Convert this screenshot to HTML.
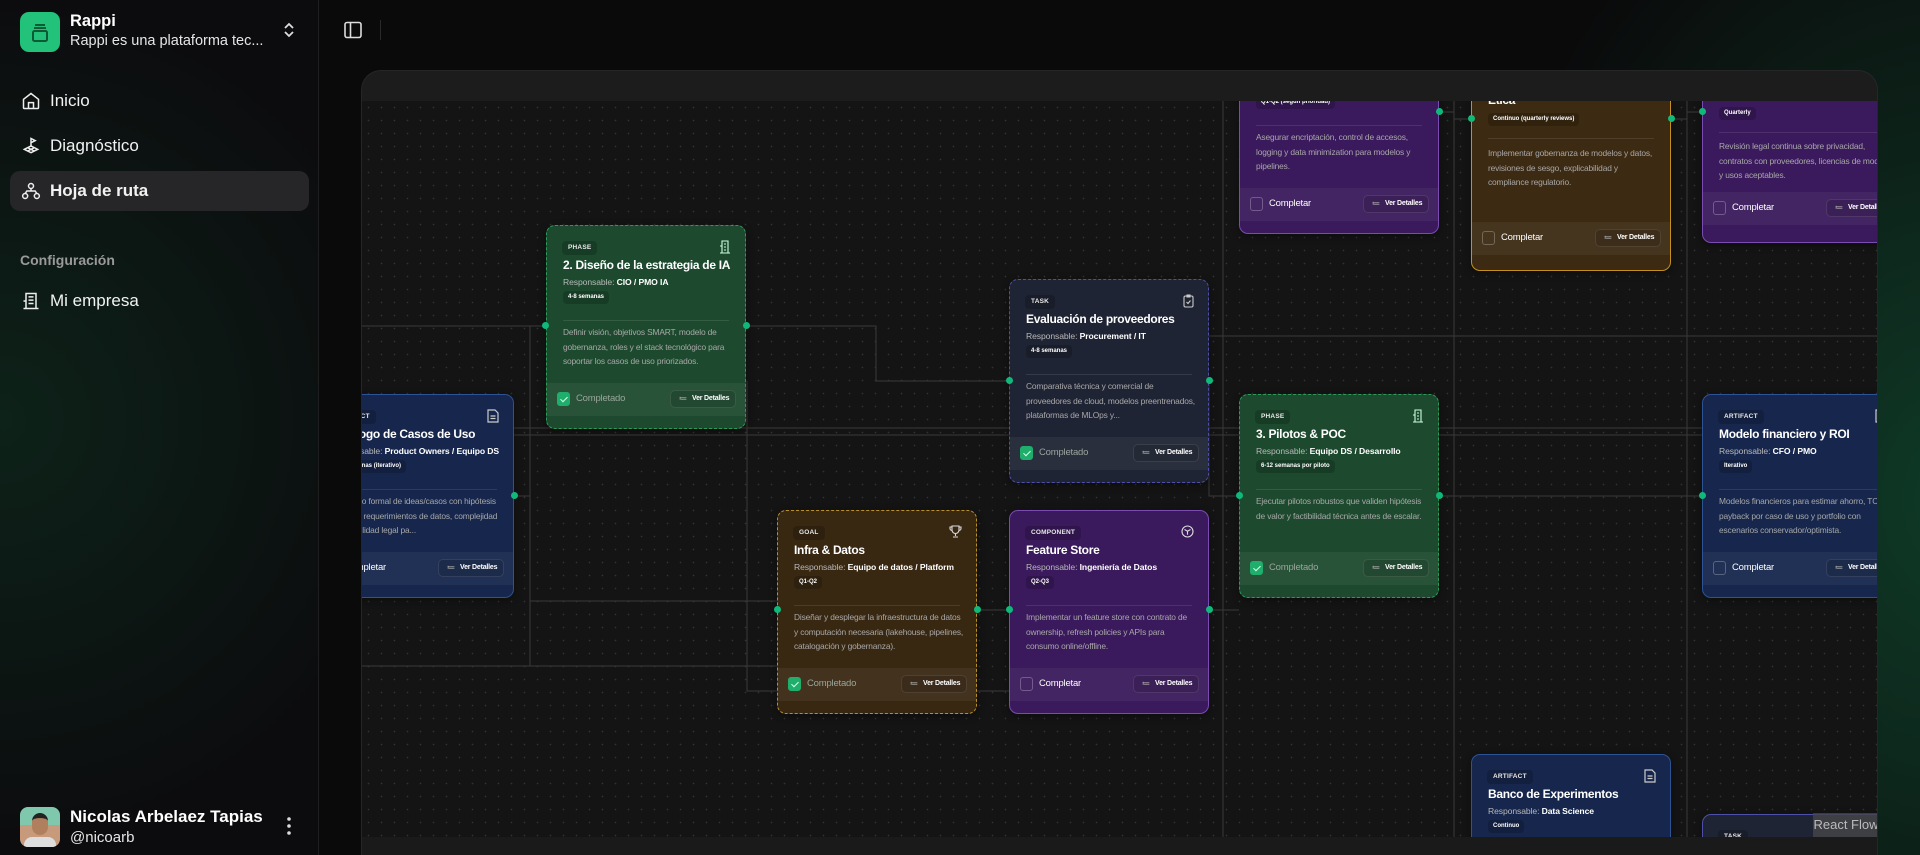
<!DOCTYPE html>
<html><head><meta charset="utf-8"><style>
*{box-sizing:border-box;margin:0;padding:0}
body{width:1920px;height:855px;overflow:hidden;background:#0a0a0b;font-family:"Liberation Sans",sans-serif;color:#fff;position:relative}
.glow{position:absolute;inset:0;background:radial-gradient(ellipse 500px 700px at 1950px 500px,#0f3a27 0%,rgba(10,10,11,0) 100%)}
.side{position:absolute;left:0;top:0;width:319px;height:855px;border-right:1px solid #1e1e20;background:radial-gradient(ellipse 420px 420px at 0px 420px,#0d2219 0%,rgba(12,12,14,0) 100%),#0c0c0e}
.logo{position:absolute;left:20px;top:12px;width:40px;height:40px;border-radius:9px;background:#22c27a}
.nav{position:absolute;left:10px;width:299px;height:40px;display:flex;align-items:center;font-size:17px;color:#f2f2f2}
.nav svg{position:absolute;left:11px}
.nav span{position:absolute;left:40px}
.panel{position:absolute;left:361px;top:70px;width:1517px;height:785px;border-radius:20px 20px 0 0;background:#1c1c1d;border:1px solid #262628;border-bottom:none;overflow:hidden}
.canvas{position:absolute;left:0;top:30px;width:1517px;height:736px;background-color:#141414;background-image:radial-gradient(#333 0.7px,transparent 0.9px);background-size:13px 13px;overflow:hidden}
.bottom{position:absolute;left:0;top:766px;width:1517px;height:30px;background:#1a1a1b}
.card{position:absolute;width:200px;height:204px;border-radius:9px;overflow:hidden;box-shadow:0 2px 8px rgba(0,0,0,.4)}
.badge{position:absolute;left:15px;top:15px;height:14px;padding:0 6px;font-size:6.5px;font-weight:bold;line-height:14px;border-radius:4px;background:rgba(0,0,0,.18);color:#e8e8e8;letter-spacing:.2px}
.ic{position:absolute;right:14px;top:14px}
.t{position:absolute;left:16px;top:32px;font-size:12px;font-weight:bold;white-space:nowrap;letter-spacing:-.3px}
.r{position:absolute;left:16px;top:51px;font-size:8.6px;color:#b8b8b8;white-space:nowrap;letter-spacing:-.1px}
.r b{color:#fff}
.p{position:absolute;left:16px;top:65px;height:13px;padding:0 5px;font-size:6px;font-weight:bold;line-height:13px;border-radius:4px;background:rgba(0,0,0,.18);white-space:nowrap}
.hr{position:absolute;left:16px;right:16px;top:94px;height:1px;background:rgba(255,255,255,.1)}
.d{position:absolute;left:16px;right:10px;top:99px;font-size:8.4px;line-height:14.5px;color:#a8a8a8;letter-spacing:-.15px}
.f{position:absolute;left:0;right:0;top:157px;height:33px;background:rgba(255,255,255,.05)}
.cb{position:absolute;left:10px;top:9px;width:13px;height:14px;border-radius:3px;border:1px solid rgba(255,255,255,.25)}
.cb.on{background:#1fae6c;border-color:#1fae6c}
.cb.on:after{content:"";position:absolute;left:4px;top:2px;width:3px;height:6px;border:solid #d9ffe9;border-width:0 1.3px 1.3px 0;transform:rotate(45deg)}
.fl{position:absolute;left:29px;top:10px;font-size:9.5px;color:#fff;letter-spacing:-.2px}
.fl.g{color:#9aa59c}
.btn{position:absolute;right:9px;top:7px;width:66px;height:18px;border-radius:5px;border:1px solid rgba(255,255,255,.1);background:rgba(0,0,0,.12);font-size:7px;font-weight:bold;line-height:16px;padding-left:21px;color:#fff;white-space:nowrap;letter-spacing:-.2px}
.btn:before{content:"≔";position:absolute;left:8px;top:0;font-size:8px;color:#aaa}
.h{position:absolute;width:7px;height:7px;border-radius:50%;background:#10b97a;top:95px}
.green{background:#1d4a2e;border:1px dashed #2f9a58}
.task{background:#1f2434;border:1px dashed #4d4fa8}
.blue{background:#16264c;border:1px solid #2e5394}
.goal{background:#382812;border:1px dashed #b88f2a}
.purp{background:#3a1a5c;border:1px solid #7a4bb0}
.eth{background:#3c2a12;border:1px solid #c4901f}
</style></head><body>
<div class="glow"></div>
<div class="side">
  <div class="logo"><svg width="40" height="40" viewBox="0 0 40 40" fill="none" stroke="#0e5a35" stroke-width="2"><rect x="13" y="19" width="14" height="10" rx="1.5"/><path d="M14 16h12M15 13h10"/></svg></div>
  <div style="position:absolute;left:70px;top:12px;font-size:16.5px;font-weight:bold">Rappi</div>
  <div style="position:absolute;left:70px;top:33px;font-size:14.5px;color:#e6e6e6">Rappi es una plataforma tec...</div>
  <svg style="position:absolute;left:282px;top:20px" width="14" height="20" viewBox="0 0 14 20" fill="none" stroke="#ddd" stroke-width="1.8"><path d="M3 8l4-4 4 4M3 12l4 4 4-4"/></svg>
  <div class="nav" style="top:81px"><svg width="20" height="20" viewBox="0 0 24 24" fill="none" stroke="#eee" stroke-width="1.8"><path d="M3 10l9-7 9 7v10a1 1 0 01-1 1H4a1 1 0 01-1-1z"/><path d="M9 21v-7h6v7"/></svg><span>Inicio</span></div>
  <div class="nav" style="top:126px"><svg width="20" height="20" viewBox="0 0 24 24" fill="none" stroke="#eee" stroke-width="1.8"><path d="M12 13V3l5 2.5-5 2.5"/><path d="M4 16l8-4 8 4-8 4z"/><path d="M8 14l8 4M16 14l-8 4"/></svg><span>Diagnóstico</span></div>
  <div class="nav" style="top:171px;background:#262628;border-radius:10px;font-weight:bold"><svg width="20" height="20" viewBox="0 0 24 24" fill="none" stroke="#eee" stroke-width="1.8"><circle cx="12" cy="6" r="3"/><circle cx="5" cy="18" r="3"/><circle cx="19" cy="18" r="3"/><path d="M12 9v3M5 15l2-3h10l2 3"/></svg><span>Hoja de ruta</span></div>
  <div style="position:absolute;left:20px;top:252px;font-size:14px;font-weight:bold;color:#9a9a9a">Configuración</div>
  <div class="nav" style="top:281px"><svg width="20" height="20" viewBox="0 0 24 24" fill="none" stroke="#eee" stroke-width="1.8"><path d="M6 21V3h12v18M3 21h18M3 12h3v9M9 7h6M9 11h6M9 15h6"/></svg><span>Mi empresa</span></div>
  <div style="position:absolute;left:20px;top:807px;width:40px;height:40px;border-radius:8px;background:linear-gradient(#7fc7ad 0 45%,#c79a7c 45%);overflow:hidden"><div style="position:absolute;left:12px;top:6px;width:16px;height:22px;border-radius:8px;background:#b07f5e;border-top:5px solid #222"></div><div style="position:absolute;left:4px;top:30px;width:32px;height:14px;border-radius:8px 8px 0 0;background:#ddd"></div></div>
  <div style="position:absolute;left:70px;top:807px;font-size:17px;font-weight:bold">Nicolas Arbelaez Tapias</div>
  <div style="position:absolute;left:70px;top:829px;font-size:15px;color:#e6e6e6">@nicoarb</div>
  <svg style="position:absolute;left:285px;top:816px" width="8" height="20"><circle cx="4" cy="3" r="1.8" fill="#ddd"/><circle cx="4" cy="10" r="1.8" fill="#ddd"/><circle cx="4" cy="17" r="1.8" fill="#ddd"/></svg>
</div>
<svg style="position:absolute;left:344px;top:21px" width="18" height="18" viewBox="0 0 18 18" fill="none" stroke="#ddd" stroke-width="1.6"><rect x="1" y="1.5" width="16" height="15" rx="2"/><path d="M6.5 1.5v15"/></svg>
<div style="position:absolute;left:380px;top:20px;width:1px;height:20px;background:#2a2a2a"></div>

<div class="panel">
<div class="canvas">
<svg style="position:absolute;left:0;top:0" width="1517" height="736" fill="none" stroke="#3a3a3a" stroke-width="1">
<path d="M0 225H184M384 225H514V280H647"/>
<path d="M0 327H1517"/><path d="M0 334H1517"/>
<path d="M847 235H1517"/>
<path d="M152 395H168V225"/>
<path d="M168 395V565H0"/>
<path d="M0 565H415"/>
<path d="M168 500H415"/>
<path d="M615 509H647M847 509H877"/>
<path d="M1077 395H1340"/>
<path d="M861 0V736"/><path d="M1092 0V736"/><path d="M1325 0V736"/>
<path d="M1077 11H1092V18H1109M1309 18H1325V11H1340"/>
<path d="M847 280V395H877"/>
<path d="M385 280V590H700"/>
</svg>

<div class="card blue" style="left:-48px;top:293px"><div class="badge">ARTIFACT</div><svg class="ic" width="12" height="14" viewBox="0 0 12 14" fill="none" stroke="#ccc" stroke-width="1.2"><path d="M1 1h7l3 3v9H1z M3.5 7h5M3.5 9.5h5"/></svg><div class="t">Catálogo de Casos de Uso</div><div class="r">Responsable: <b>Product Owners / Equipo DS</b></div><div class="p">4-6 semanas (iterativo)</div><div class="hr"></div><div class="d">Inventario formal de ideas/casos con hipótesis de valor, requerimientos de datos, complejidad y sensibilidad legal pa...</div><div class="f"><div class="cb"></div><div class="fl">Completar</div><div class="btn">Ver Detalles</div></div></div>

<div class="card green" style="left:184px;top:124px"><div class="badge">PHASE</div><svg class="ic" width="12" height="14" viewBox="0 0 12 14" fill="none" stroke="#cfd" stroke-width="1.1"><path d="M3 13V1h6v12M1 13h10M1 6h2v7M5 4h2M5 7h2M5 10h2"/></svg><div class="t">2. Diseño de la estrategia de IA</div><div class="r">Responsable: <b>CIO / PMO IA</b></div><div class="p">4-8 semanas</div><div class="hr"></div><div class="d">Definir visión, objetivos SMART, modelo de gobernanza, roles y el stack tecnológico para soportar los casos de uso priorizados.</div><div class="f"><div class="cb on"></div><div class="fl g">Completado</div><div class="btn">Ver Detalles</div></div></div>

<div class="card task" style="left:647px;top:178px"><div class="badge">TASK</div><svg class="ic" width="11" height="14" viewBox="0 0 11 14" fill="none" stroke="#ccc" stroke-width="1.1"><rect x="1" y="2" width="9" height="11" rx="1.5"/><path d="M4 1h3v2H4zM3.5 8l1.5 1.5 2.5-3"/></svg><div class="t">Evaluación de proveedores</div><div class="r">Responsable: <b>Procurement / IT</b></div><div class="p">4-8 semanas</div><div class="hr"></div><div class="d">Comparativa técnica y comercial de proveedores de cloud, modelos preentrenados, plataformas de MLOps y...</div><div class="f"><div class="cb on"></div><div class="fl g">Completado</div><div class="btn">Ver Detalles</div></div></div>

<div class="card goal" style="left:415px;top:409px"><div class="badge">GOAL</div><svg class="ic" width="13" height="13" viewBox="0 0 13 13" fill="none" stroke="#ddd" stroke-width="1.1"><path d="M3 1h7v4a3.5 3.5 0 01-7 0zM3 2H1v1.5A2 2 0 003 5.5M10 2h2v1.5A2 2 0 0110 5.5M6.5 8.5V11M4 12h5"/></svg><div class="t">Infra &amp; Datos</div><div class="r">Responsable: <b>Equipo de datos / Platform</b></div><div class="p">Q1-Q2</div><div class="hr"></div><div class="d">Diseñar y desplegar la infraestructura de datos y computación necesaria (lakehouse, pipelines, catalogación y gobernanza).</div><div class="f"><div class="cb on"></div><div class="fl g">Completado</div><div class="btn">Ver Detalles</div></div></div>

<div class="card purp" style="left:647px;top:409px"><div class="badge">COMPONENT</div><svg class="ic" width="13" height="13" viewBox="0 0 13 13" fill="none" stroke="#ddd" stroke-width="1.1"><circle cx="6.5" cy="6.5" r="5.5"/><path d="M3.5 4.5l3 1.7 3-1.7M6.5 6.2v3.5"/></svg><div class="t">Feature Store</div><div class="r">Responsable: <b>Ingeniería de Datos</b></div><div class="p">Q2-Q3</div><div class="hr"></div><div class="d">Implementar un feature store con contrato de ownership, refresh policies y APIs para consumo online/offline.</div><div class="f"><div class="cb"></div><div class="fl">Completar</div><div class="btn">Ver Detalles</div></div></div>

<div class="card green" style="left:877px;top:293px"><div class="badge">PHASE</div><svg class="ic" width="12" height="14" viewBox="0 0 12 14" fill="none" stroke="#cfd" stroke-width="1.1"><path d="M3 13V1h6v12M1 13h10M1 6h2v7M5 4h2M5 7h2M5 10h2"/></svg><div class="t">3. Pilotos &amp; POC</div><div class="r">Responsable: <b>Equipo DS / Desarrollo</b></div><div class="p">6-12 semanas por piloto</div><div class="hr"></div><div class="d">Ejecutar pilotos robustos que validen hipótesis de valor y factibilidad técnica antes de escalar.</div><div class="f"><div class="cb on"></div><div class="fl g">Completado</div><div class="btn">Ver Detalles</div></div></div>

<div class="card blue" style="left:1340px;top:293px"><div class="badge">ARTIFACT</div><svg class="ic" width="12" height="14" viewBox="0 0 12 14" fill="none" stroke="#ccc" stroke-width="1.2"><path d="M1 1h7l3 3v9H1z M3.5 7h5M3.5 9.5h5"/></svg><div class="t">Modelo financiero y ROI</div><div class="r">Responsable: <b>CFO / PMO</b></div><div class="p">Iterativo</div><div class="hr"></div><div class="d">Modelos financieros para estimar ahorro, TCO y payback por caso de uso y portfolio con escenarios conservador/optimista.</div><div class="f"><div class="cb"></div><div class="fl">Completar</div><div class="btn">Ver Detalles</div></div></div>

<div class="card purp" style="left:877px;top:-71px"><div class="badge">COMPONENT</div><div class="t">Seguridad y privacidad</div><div class="r">Responsable: <b>CISO</b></div><div class="p">Q1-Q2 (según prioridad)</div><div class="hr"></div><div class="d">Asegurar encriptación, control de accesos, logging y data minimization para modelos y pipelines.</div><div class="f"><div class="cb"></div><div class="fl">Completar</div><div class="btn">Ver Detalles</div></div></div>

<div class="card eth" style="left:1109px;top:-52px;height:222px"><div class="badge">GOAL</div><div class="t" style="top:43px">Ética</div><div class="p" style="top:63px">Continuo (quarterly reviews)</div><div class="hr" style="top:88px"></div><div class="d" style="top:96px">Implementar gobernanza de modelos y datos, revisiones de sesgo, explicabilidad y compliance regulatorio.</div><div class="f" style="top:172px"><div class="cb"></div><div class="fl">Completar</div><div class="btn">Ver Detalles</div></div></div>

<div class="card purp" style="left:1340px;top:-65px;height:207px"><div class="badge">TASK</div><div class="t">Revisión legal</div><div class="p" style="top:70px">Quarterly</div><div class="hr" style="top:95px"></div><div class="d" style="top:102px">Revisión legal continua sobre privacidad, contratos con proveedores, licencias de modelo y usos aceptables.</div><div class="f" style="top:155px"><div class="cb"></div><div class="fl">Completar</div><div class="btn">Ver Detalles</div></div></div>

<div class="card blue" style="left:1109px;top:653px"><div class="badge">ARTIFACT</div><svg class="ic" width="12" height="14" viewBox="0 0 12 14" fill="none" stroke="#ccc" stroke-width="1.2"><path d="M1 1h7l3 3v9H1z M3.5 7h5M3.5 9.5h5"/></svg><div class="t">Banco de Experimentos</div><div class="r">Responsable: <b>Data Science</b></div><div class="p">Continuo</div></div>

<div class="card task" style="left:1340px;top:713px;border-style:solid"><div class="badge">TASK</div></div>

<div class="h" style="left:180px;top:221px"></div><div class="h" style="left:381px;top:221px"></div>
<div class="h" style="left:644px;top:276px"></div><div class="h" style="left:844px;top:276px"></div>
<div class="h" style="left:149px;top:391px"></div>
<div class="h" style="left:412px;top:505px"></div><div class="h" style="left:612px;top:505px"></div>
<div class="h" style="left:644px;top:505px"></div><div class="h" style="left:844px;top:505px"></div>
<div class="h" style="left:874px;top:391px"></div><div class="h" style="left:1074px;top:391px"></div>
<div class="h" style="left:1337px;top:391px"></div>
<div class="h" style="left:1074px;top:7px"></div><div class="h" style="left:1106px;top:14px"></div><div class="h" style="left:1306px;top:14px"></div><div class="h" style="left:1337px;top:7px"></div>

<div style="position:absolute;right:0;top:712px;width:66px;height:24px;background:rgba(70,70,72,.8);font-size:13px;color:#bbb;line-height:24px;text-align:center">React Flow</div>
</div>
<div class="bottom"></div>
</div>
</body></html>
